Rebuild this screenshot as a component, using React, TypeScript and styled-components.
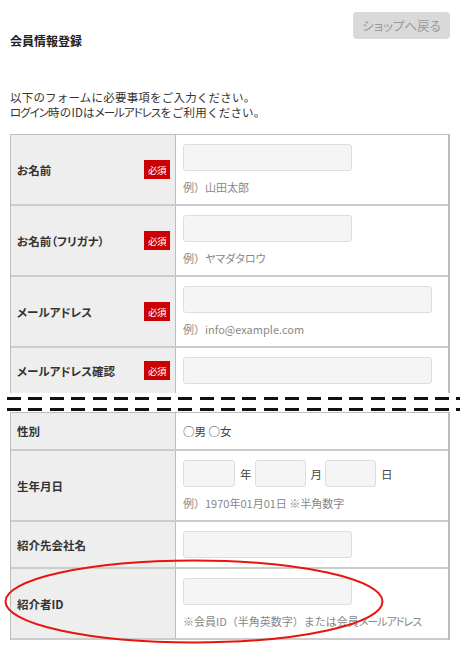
import React from "react";
import styled, { createGlobalStyle } from "styled-components";

const Global = createGlobalStyle`
  html, body { margin: 0; padding: 0; background: #fff; }
  body {
    font-family: "Noto Sans CJK JP", "Noto Sans", sans-serif;
    color: #333;
  }
`;

const Page = styled.div`
  position: relative;
  width: 460px;
  height: 653px;
  overflow: hidden;
  padding: 0 10px;
  box-sizing: border-box;
`;

/* proportional kana run, as the reference font sets katakana narrow */
const Kana = styled.span<{ $tight?: number }>`
  font-feature-settings: "palt";
  letter-spacing: ${(p) => (p.$tight ? `-${p.$tight}px` : "normal")};
`;

const Header = styled.div`
  display: flex;
  justify-content: space-between;
  align-items: flex-start;
  padding-top: 12px;
`;

const Title = styled.h1`
  margin: 21px 0 0;
  font-size: 12px;
  line-height: 16px;
  font-weight: bold;
  color: #222;
`;

const BackButton = styled.button`
  width: 97px;
  height: 27px;
  border: none;
  border-radius: 4px;
  background: #d9d9d9;
  color: #9a9a9a;
  font-family: inherit;
  font-feature-settings: "palt";
  font-size: 12.5px;
  padding: 0;
  cursor: pointer;
`;

const Intro = styled.p`
  margin: 41px 0 14px;
  font-size: 11.5px;
  line-height: 15px;
  letter-spacing: 0.2px;
  color: #333;
`;

const Table = styled.div`
  border-top: 1px solid #bdbdbd;
  border-left: 1px solid #bdbdbd;
  border-right: 2px solid #bdbdbd;
`;

const Row = styled.div<{ $noBorder?: boolean }>`
  display: grid;
  grid-template-columns: 165px 1fr;
  border-bottom: ${(p) => (p.$noBorder ? "none" : "2px solid #cccccc")};
`;

const LabelCell = styled.div`
  background: #eeeeee;
  border-right: 1px solid #bdbdbd;
  display: flex;
  align-items: center;
  justify-content: space-between;
  padding: 0 5px 0 6px;
`;

const Label = styled.span`
  font-size: 11.5px;
  line-height: 16px;
  font-weight: bold;
  color: #333;
  font-feature-settings: "palt";
`;

const Badge = styled.span`
  width: 26px;
  height: 19px;
  background: #cc0000;
  color: #fff;
  font-size: 9.5px;
  letter-spacing: -0.5px;
  display: flex;
  align-items: center;
  justify-content: center;
`;

const ValueCell = styled.div`
  padding: 9px 7px;
  display: flex;
  flex-direction: column;
  align-items: flex-start;
`;

const TextInput = styled.input<{ $w: number }>`
  display: block;
  width: ${(p) => p.$w}px;
  height: 27px;
  box-sizing: border-box;
  margin: 0;
  padding: 0 6px;
  background: #f5f5f5;
  border: 1px solid #dedede;
  border-radius: 3px;
  font-family: inherit;
`;

const Note = styled.div`
  margin-top: 8px;
  font-size: 11px;
  line-height: 16px;
  color: #888;
  white-space: nowrap;
`;

const Gender = styled.div`
  font-size: 11.5px;
  line-height: 16px;
  padding: 1px 0;
  color: #444;
`;

const DateLine = styled.div`
  display: flex;
  align-items: center;
`;

const Unit = styled.span`
  font-size: 11.5px;
  color: #444;
  margin: 0 3px 0 5px;
`;

const Divider = styled.div`
  margin: 0 -10px 0 -3px;
  padding: 4px 0 1px;
  display: flex;
  flex-direction: column;
  gap: 8px;
`;

const DashLine = styled.div`
  height: 3px;
  background: repeating-linear-gradient(
    to right,
    #111 0px,
    #111 14px,
    transparent 14px,
    transparent 21.4px
  );
`;

const Overlay = styled.svg`
  position: absolute;
  left: 0;
  top: 0;
  pointer-events: none;
`;

type FieldProps = {
  label: string;
  required?: boolean;
  noBorder?: boolean;
  children: React.ReactNode;
};

const Field = ({ label, required, noBorder, children }: FieldProps) => (
  <Row $noBorder={noBorder}>
    <LabelCell>
      <Label>{label}</Label>
      {required && <Badge>必須</Badge>}
    </LabelCell>
    <ValueCell>{children}</ValueCell>
  </Row>
);

export default function App() {
  return (
    <Page>
      <Global />
      <Header>
        <Title>会員情報登録</Title>
        <BackButton>ショップへ戻る</BackButton>
      </Header>
      <Intro>
        以下のフォームに必要事項をご入力ください。
        <br />
        <Kana $tight={1}>ログイン</Kana>時のIDは<Kana $tight={1}>メールアドレス</Kana>
        をご利用ください。
      </Intro>

      <Table>
        <Field label="お名前" required>
          <TextInput $w={169} />
          <Note>例）山田太郎</Note>
        </Field>
        <Field label="お名前（フリガナ）" required>
          <TextInput $w={169} />
          <Note>
            例）<Kana>ヤマダタロウ</Kana>
          </Note>
        </Field>
        <Field label="メールアドレス" required>
          <TextInput $w={249} />
          <Note>例）info@example.com</Note>
        </Field>
        <Field label="メールアドレス確認" required noBorder>
          <TextInput $w={249} />
        </Field>
      </Table>

      <Divider>
        <DashLine />
        <DashLine />
      </Divider>

      <Table>
        <Field label="性別">
          <Gender>○男 ○女</Gender>
        </Field>
        <Field label="生年月日">
          <DateLine>
            <TextInput $w={52} />
            <Unit>年</Unit>
            <TextInput $w={51} />
            <Unit>月</Unit>
            <TextInput $w={51} />
            <Unit>日</Unit>
          </DateLine>
          <Note>例）1970年01月01日 ※半角数字</Note>
        </Field>
        <Field label="紹介先会社名">
          <TextInput $w={169} />
        </Field>
        <Field label="紹介者ID">
          <TextInput $w={169} />
          <Note>
            ※会員ID（半角英数字）または会員<Kana $tight={1}>メールアドレス</Kana>
          </Note>
        </Field>
      </Table>

      <Overlay width="460" height="653" viewBox="0 0 460 653">
        <ellipse
          cx="194"
          cy="601.5"
          rx="188.5"
          ry="41"
          fill="none"
          stroke="#e8140f"
          strokeWidth="2"
        />
      </Overlay>
    </Page>
  );
}
